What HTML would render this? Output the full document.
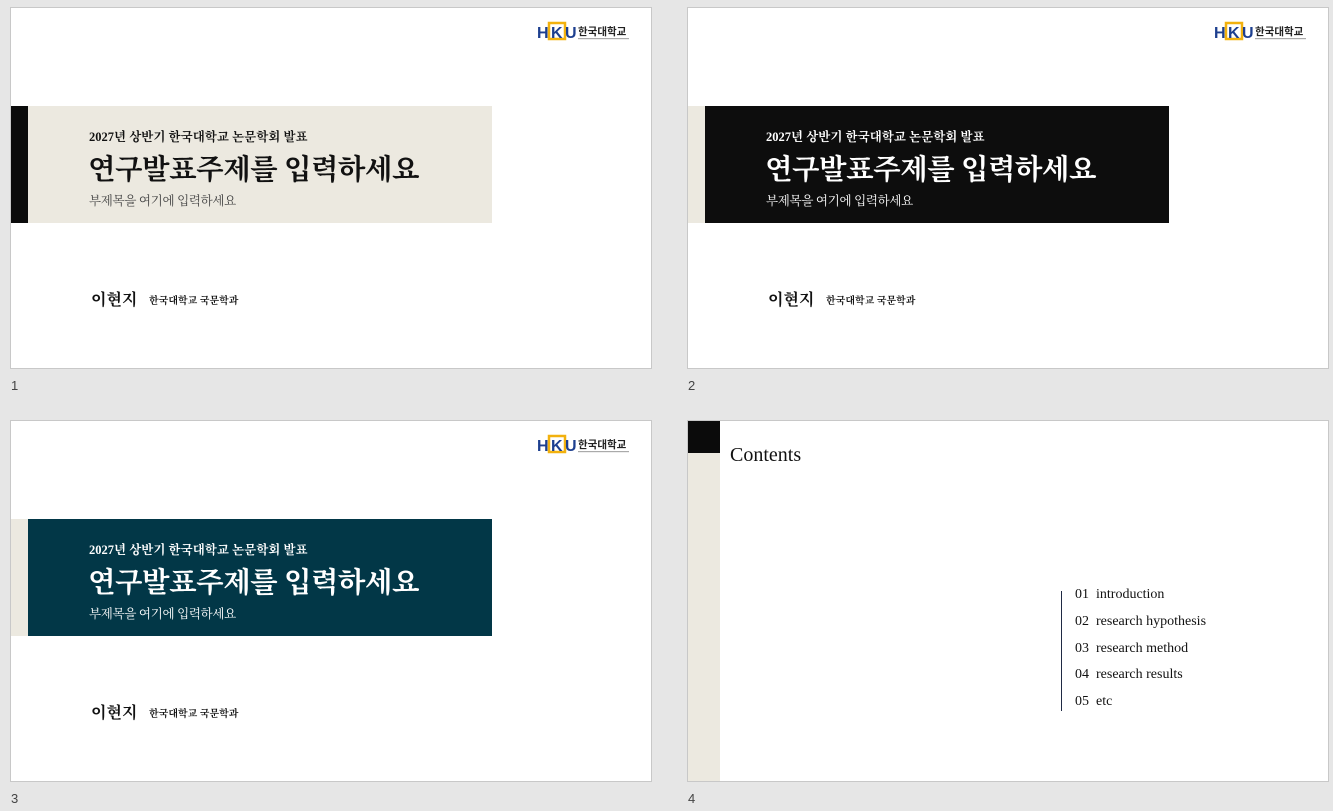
<!DOCTYPE html>
<html><head><meta charset="utf-8"><style>
*{margin:0;padding:0;box-sizing:border-box}
body{width:1333px;height:811px;background:#e6e6e6;position:relative;overflow:hidden;font-family:"Liberation Serif","Noto Serif CJK KR","Noto Serif CJK SC",serif;color:#111}
.s{position:absolute;width:642px;height:362px;background:#fff;border:1px solid #c8c8c8;overflow:hidden}
.n{position:absolute;font-family:"Liberation Sans",sans-serif;font-size:13px;color:#444}
.a{position:absolute}
.logo{position:absolute;left:526px;top:12px;width:100px;height:24px}
.t1{position:absolute;left:78px;top:119px;font-size:12.5px;font-weight:bold;white-space:nowrap}
.t2{position:absolute;left:77px;top:139px;font-size:28.5px;font-weight:bold;white-space:nowrap;letter-spacing:-0.5px}
.t3{position:absolute;left:78px;top:183px;font-size:12.5px;white-space:nowrap;color:#444;letter-spacing:-0.3px}
.nm{position:absolute;left:80px;top:279px;font-size:16px;font-weight:bold}
.dp{position:absolute;left:138px;top:284px;font-size:10px;font-weight:bold}
.li{position:absolute;left:387px;font-size:14px;white-space:nowrap}
</style></head><body>

<!-- slide 1 -->
<div class="s" style="left:10px;top:7px">
 <div class="logo"><svg width="100" height="24"><text x="0" y="18" font-family="Liberation Sans" font-weight="bold" font-size="16" fill="#1d3f8f">H</text><rect x="12" y="3" width="16" height="16" fill="none" stroke="#f2b10e" stroke-width="2.5"/><text x="14" y="18" font-family="Liberation Sans" font-weight="bold" font-size="16" fill="#1d3f8f">K</text><text x="28" y="18" font-family="Liberation Sans" font-weight="bold" font-size="16" fill="#1d3f8f">U</text><text x="41" y="15" font-family="Noto Sans CJK KR" font-weight="bold" font-size="10.5" fill="#222">한국대학교</text><rect x="41" y="18" width="51" height="1.2" fill="#aaa"/></svg></div>
 <div class="a" style="left:0;top:98px;width:17px;height:117px;background:#0b0b0b"></div>
 <div class="a" style="left:17px;top:98px;width:464px;height:117px;background:#ece9e0"></div>
 <div class="t1">2027년 상반기 한국대학교 논문학회 발표</div>
 <div class="t2">연구발표주제를 입력하세요</div>
 <div class="t3">부제목을 여기에 입력하세요</div>
 <div class="nm">이현지</div><div class="dp">한국대학교 국문학과</div>
</div>
<div class="n" style="left:11px;top:378px">1</div>

<!-- slide 2 -->
<div class="s" style="left:687px;top:7px">
 <div class="logo"><svg width="100" height="24"><text x="0" y="18" font-family="Liberation Sans" font-weight="bold" font-size="16" fill="#1d3f8f">H</text><rect x="12" y="3" width="16" height="16" fill="none" stroke="#f2b10e" stroke-width="2.5"/><text x="14" y="18" font-family="Liberation Sans" font-weight="bold" font-size="16" fill="#1d3f8f">K</text><text x="28" y="18" font-family="Liberation Sans" font-weight="bold" font-size="16" fill="#1d3f8f">U</text><text x="41" y="15" font-family="Noto Sans CJK KR" font-weight="bold" font-size="10.5" fill="#222">한국대학교</text><rect x="41" y="18" width="51" height="1.2" fill="#aaa"/></svg></div>
 <div class="a" style="left:0;top:98px;width:17px;height:117px;background:#ece9e0"></div>
 <div class="a" style="left:17px;top:98px;width:464px;height:117px;background:#0d0d0d"></div>
 <div class="t1" style="color:#fff">2027년 상반기 한국대학교 논문학회 발표</div>
 <div class="t2" style="color:#fff">연구발표주제를 입력하세요</div>
 <div class="t3" style="color:#fff">부제목을 여기에 입력하세요</div>
 <div class="nm">이현지</div><div class="dp">한국대학교 국문학과</div>
</div>
<div class="n" style="left:688px;top:378px">2</div>

<!-- slide 3 -->
<div class="s" style="left:10px;top:420px">
 <div class="logo"><svg width="100" height="24"><text x="0" y="18" font-family="Liberation Sans" font-weight="bold" font-size="16" fill="#1d3f8f">H</text><rect x="12" y="3" width="16" height="16" fill="none" stroke="#f2b10e" stroke-width="2.5"/><text x="14" y="18" font-family="Liberation Sans" font-weight="bold" font-size="16" fill="#1d3f8f">K</text><text x="28" y="18" font-family="Liberation Sans" font-weight="bold" font-size="16" fill="#1d3f8f">U</text><text x="41" y="15" font-family="Noto Sans CJK KR" font-weight="bold" font-size="10.5" fill="#222">한국대학교</text><rect x="41" y="18" width="51" height="1.2" fill="#aaa"/></svg></div>
 <div class="a" style="left:0;top:98px;width:17px;height:117px;background:#ece9e0"></div>
 <div class="a" style="left:17px;top:98px;width:464px;height:117px;background:#023747"></div>
 <div class="t1" style="color:#fff">2027년 상반기 한국대학교 논문학회 발표</div>
 <div class="t2" style="color:#fff">연구발표주제를 입력하세요</div>
 <div class="t3" style="color:#fff">부제목을 여기에 입력하세요</div>
 <div class="nm">이현지</div><div class="dp">한국대학교 국문학과</div>
</div>
<div class="n" style="left:11px;top:791px">3</div>

<!-- slide 4 -->
<div class="s" style="left:687px;top:420px">
 <div class="a" style="left:0;top:0;width:32px;height:32px;background:#0b0b0b"></div>
 <div class="a" style="left:0;top:32px;width:32px;height:331px;background:#ece9e0"></div>
 <div class="a" style="left:42px;top:23px;font-size:20px">Contents</div>
 <div class="a" style="left:373px;top:170px;width:1px;height:120px;background:#1f2a44"></div>
 <div class="li" style="top:166px">01&nbsp; introduction</div>
 <div class="li" style="top:193px">02&nbsp; research hypothesis</div>
 <div class="li" style="top:220px">03&nbsp; research method</div>
 <div class="li" style="top:246px">04&nbsp; research results</div>
 <div class="li" style="top:273px">05&nbsp; etc</div>
</div>
<div class="n" style="left:688px;top:791px">4</div>

</body></html>
